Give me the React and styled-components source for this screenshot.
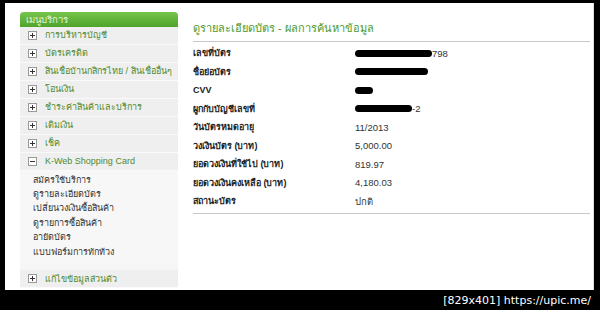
import React from 'react';
import styled, { createGlobalStyle } from 'styled-components';

const GlobalStyle = createGlobalStyle`
  body {
    margin: 0;
    background: #000;
  }
`;

const Frame = styled.div`
  width: 600px;
  height: 310px;
  background: #000;
  padding: 3px 6px 0 5px;
  box-sizing: border-box;
  display: flex;
  flex-direction: column;
`;

const Page = styled.div`
  height: 287px;
  background: #fff;
  display: flex;
  padding: 9px 0 0 15px;
  box-sizing: border-box;
  border-right: 1px solid #ddd;
  font-family: "Liberation Sans", Tahoma, "Noto Sans", sans-serif;
`;

const Footer = styled.div`
  flex: 1;
  display: flex;
  justify-content: flex-end;
  align-items: center;
  padding-right: 3px;
  color: #fff;
  font-family: "DejaVu Sans", sans-serif;
  font-size: 11px;
`;

const Sidebar = styled.div`
  width: 158px;
  height: 276px;
  background: #f6f6f6;
  display: flex;
  flex-direction: column;
`;

const SideHeader = styled.div`
  height: 15px;
  line-height: 15px;
  padding-left: 6px;
  font-size: 9.5px;
  color: #e6f5dc;
  background: linear-gradient(#76c44b, #4fa32b);
  border-radius: 4px 4px 0 0;
`;

const MenuItem = styled.div`
  height: 18px;
  display: flex;
  align-items: center;
  gap: 8px;
  padding-left: 8px;
  background: #efefef;
  border-bottom: 1px solid #fafafa;
  font-size: 9px;
  white-space: nowrap;
  overflow: hidden;
  color: #4f8a30;
  margin-top: ${p => (p.$gap ? '8px' : '0')};
`;

const Toggle = styled.span`
  width: 7px;
  height: 7px;
  border: 1px solid #999;
  background: #fff;
  position: relative;
  flex: none;
  &::before {
    content: '';
    position: absolute;
    left: 1px;
    right: 1px;
    top: 3px;
    height: 1px;
    background: #333;
  }
  &::after {
    content: '';
    position: absolute;
    top: 1px;
    bottom: 1px;
    left: 3px;
    width: 1px;
    background: #333;
    display: ${p => (p.$open ? 'none' : 'block')};
  }
`;

const SubMenu = styled.div`
  display: flex;
  flex-direction: column;
  padding: 2px 0 3px 13px;
  background: #f7f7f7;
`;

const SubItem = styled.div`
  font-size: 9px;
  line-height: 14.4px;
  white-space: nowrap;
  color: #333;
`;

const Main = styled.div`
  width: 397px;
  margin-left: 15px;
  padding-top: 9px;
`;

const Title = styled.div`
  font-size: 11px;
  line-height: 14px;
  color: #4d9a2b;
  padding-bottom: 6px;
  border-bottom: 1px solid #c8c8c8;
`;

const Table = styled.div`
  padding: 2px 0 2px;
  border-bottom: 1px solid #c8c8c8;
`;

const Row = styled.div`
  display: flex;
  align-items: center;
  height: 18.5px;
  font-size: 9.5px;
  white-space: nowrap;
`;

const Label = styled.div`
  width: 162px;
  font-weight: bold;
  font-size: 9px;
  color: #222;
`;

const Value = styled.div`
  color: #333;
  display: flex;
  align-items: center;
`;

const Blot = styled.span`
  display: inline-block;
  width: ${p => p.$w}px;
  height: 7px;
  background: #000;
  border-radius: 4px;
`;

const menu = [
  'การบริหารบัญชี',
  'บัตรเครดิต',
  'สินเชื่อบ้านกสิกรไทย / สินเชื่ออื่นๆ',
  'โอนเงิน',
  'ชำระค่าสินค้าและบริการ',
  'เติมเงิน',
  'เช็ค',
];

const subItems = [
  'สมัครใช้บริการ',
  'ดูรายละเอียดบัตร',
  'เปลี่ยนวงเงินซื้อสินค้า',
  'ดูรายการซื้อสินค้า',
  'อายัดบัตร',
  'แบบฟอร์มการทักท้วง',
];

const rows = [
  { label: 'เลขที่บัตร', blot: 77, tail: '798' },
  { label: 'ชื่อย่อบัตร', blot: 73 },
  { label: 'CVV', blot: 18 },
  { label: 'ผูกกับบัญชีเลขที่', blot: 57, tail: '-2' },
  { label: 'วันบัตรหมดอายุ', value: '11/2013' },
  { label: 'วงเงินบัตร (บาท)', value: '5,000.00' },
  { label: 'ยอดวงเงินที่ใช้ไป (บาท)', value: '819.97' },
  { label: 'ยอดวงเงินคงเหลือ (บาท)', value: '4,180.03' },
  { label: 'สถานะบัตร', value: 'ปกติ' },
];

export default function App() {
  return (
    <Frame>
      <GlobalStyle />
      <Page>
        <Sidebar>
          <SideHeader>เมนูบริการ</SideHeader>
          {menu.map(m => (
            <MenuItem key={m}>
              <Toggle />
              {m}
            </MenuItem>
          ))}
          <MenuItem>
            <Toggle $open />
            K-Web Shopping Card
          </MenuItem>
          <SubMenu>
            {subItems.map(s => (
              <SubItem key={s}>{s}</SubItem>
            ))}
          </SubMenu>
          <MenuItem $gap>
            <Toggle />
            แก้ไขข้อมูลส่วนตัว
          </MenuItem>
        </Sidebar>
        <Main>
          <Title>ดูรายละเอียดบัตร - ผลการค้นหาข้อมูล</Title>
          <Table>
            {rows.map(r => (
              <Row key={r.label}>
                <Label>{r.label}</Label>
                <Value>
                  {r.blot && <Blot $w={r.blot} />}
                  {r.tail || r.value}
                </Value>
              </Row>
            ))}
          </Table>
        </Main>
      </Page>
      <Footer>[829x401] https://upic.me/</Footer>
    </Frame>
  );
}
